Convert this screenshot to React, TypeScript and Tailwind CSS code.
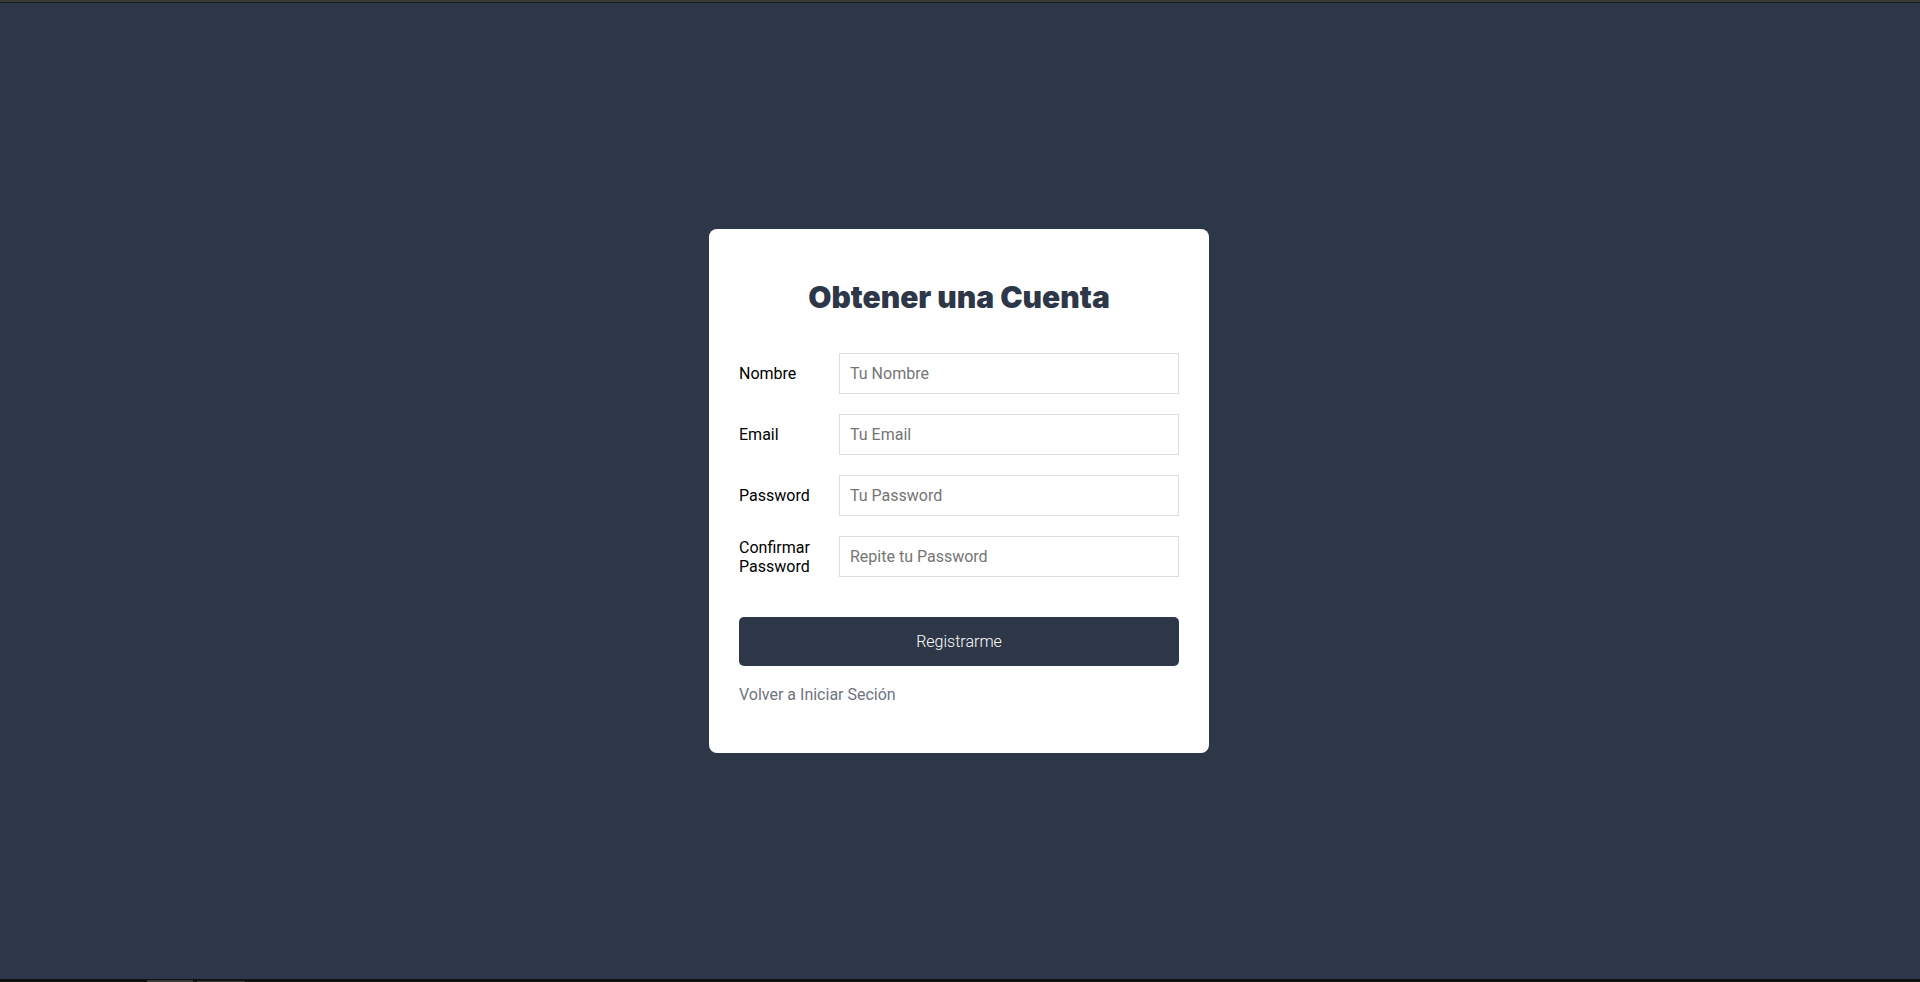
import React from "react";

export default function App() {
  const rows = [
    { label: "Nombre", ph: "Tu Nombre", type: "text" },
    { label: "Email", ph: "Tu Email", type: "email" },
    { label: "Password", ph: "Tu Password", type: "password" },
    { label: "Confirmar Password", ph: "Repite tu Password", type: "password" },
  ];
  return (
    <div className="h-screen flex flex-col bg-[#2e3748]" style={{ fontFamily: "Roboto, 'Liberation Sans', sans-serif" }}>
      <div className="h-[2px] bg-[#3a3a3a] shrink-0" />
      <div className="h-[1px] bg-[#1c1c1c] shrink-0" />
      <main className="flex-1 flex items-center justify-center pr-[2px]">
        <div className="w-[500px] bg-white rounded-lg px-[30px] pt-[50px] pb-[46px]">
          <h1 className="text-center text-[30px] leading-[36px] font-black text-[#2e3748] mb-[38px]" style={{ fontFamily: "Inter, 'Noto Sans', sans-serif" }}>
            Obtener una Cuenta
          </h1>
          <form className="flex flex-col gap-5" onSubmit={(e) => e.preventDefault()}>
            {rows.map((r) => (
              <div key={r.label} className="flex items-center">
                <label className="w-[100px] shrink-0 text-[16px] leading-[19px] text-black pr-3">{r.label}</label>
                <input
                  type={r.type}
                  placeholder={r.ph}
                  className="flex-1 h-[41px] border border-[#dedede] px-[10px] text-[16px] text-[#333] placeholder:text-[#757575] outline-none"
                />
              </div>
            ))}
          </form>
          <button className="mt-10 w-full h-[49px] rounded-[5px] border-0 bg-[#2e3748] text-white text-[16px] font-light">
            Registrarme
          </button>
          <div className="mt-[17px] text-[16px] leading-6 text-[#6e7480]">Volver a Iniciar Seción</div>
        </div>
      </main>
      <div className="h-[3px] bg-[#111111] shrink-0 flex items-end">
        <div className="ml-[147px] w-[46px] h-[2px] bg-[#3a3a3a]" />
        <div className="ml-[4px] w-[48px] h-[1px] bg-[#3a3a3a]" />
      </div>
    </div>
  );
}
